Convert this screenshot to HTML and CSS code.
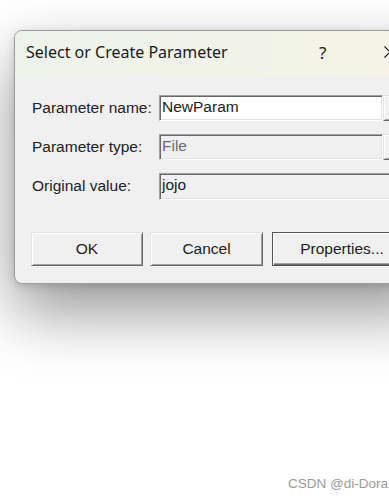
FILE: index.html
```html
<!DOCTYPE HTML>
<html>

<head>
    <meta charset="utf-8">
    <link rel="stylesheet" href="styles.css">
</head>

<body>
    <div class="screen">
        <div class="dialog">
            <div class="titlebar">
                <span class="title">Select or Create Parameter</span>
                <span class="help">?</span>
                <svg class="close" width="12" height="12" viewBox="0 0 12 12">
                    <path d="M0.5 0.5 L11.5 11.5 M11.5 0.5 L0.5 11.5" stroke="#1a1a1a" stroke-width="1.2" fill="none" />
                </svg>
            </div>
            <div class="content">
                <div class="fields">
                    <span class="label">Parameter name:</span>
                    <div class="field">
                        <div class="input">NewParam</div>
                        <div class="browse"></div>
                    </div>
                    <span class="label">Parameter type:</span>
                    <div class="field">
                        <div class="input disabled">File</div>
                        <div class="browse"></div>
                    </div>
                    <span class="label">Original value:</span>
                    <div class="field">
                        <div class="input readonly wide">jojo</div>
                    </div>
                </div>
                <div class="buttons">
                    <a href="#" class="btn ok">OK</a>
                    <a href="#" class="btn cancel">Cancel</a>
                    <a href="#" class="btn props">Properties...</a>
                </div>
            </div>
        </div>
        <div class="watermark">CSDN @di-Dora</div>
    </div>
</body>

</html>
```

FILE: styles.css
```css
html, body {
    margin: 0;
    padding: 0;
    background: #fff;
    overflow: hidden;
}
.screen {
    width: 389px;
    height: 498px;
    display: flex;
    flex-direction: column;
    overflow: hidden;
    font-family: "Liberation Sans", Arial, sans-serif;
}
.dialog {
    margin: 30px 0 0 14px;
    width: 420px;
    flex-shrink: 0;
    background: #f0f0f0;
    border: 1px solid #9c9c9c;
    border-radius: 8px;
    box-shadow: 0 28px 64px rgba(0, 0, 0, .42), 0 2px 8px rgba(0, 0, 0, .14);
    overflow: hidden;
}
.titlebar {
    height: 45px;
    box-sizing: border-box;
    padding: 0 39px 3px 11px;
    display: flex;
    align-items: center;
    background: linear-gradient(90deg, #eef3ea, #f5f3e6);
    color: #1a1a1a;
}
.title {
    flex: 1;
    font-family: "Noto Sans", "Open Sans", sans-serif;
    font-size: 16px;
}
.help {
    font-family: "Noto Sans", sans-serif;
    font-size: 17px;
    width: 10px;
    margin-right: 55px;
}
.close {
    display: block;
}
.content {
    padding: 19px 0 17px 17px;
}
.fields {
    display: grid;
    grid-template-columns: 127px 1fr;
    row-gap: 13px;
    align-items: center;
}
.label {
    font-size: 15.5px;
    color: #222;
}
.field {
    display: flex;
    height: 26px;
}
.input {
    box-sizing: border-box;
    width: 224px;
    height: 26px;
    background: #fff;
    border-top: 1px solid #a0a0a0;
    border-left: 1px solid #a0a0a0;
    border-bottom: 1px solid #fff;
    border-right: 1px solid #fff;
    box-shadow: inset 1px 1px #696969, inset -1px -1px #e3e3e3;
    padding: 2px 0 0 2px;
    font-size: 15.5px;
    color: #222;
}
.input.disabled {
    background: #f0f0f0;
    color: #6d6d6d;
}
.input.readonly {
    background: #f0f0f0;
}
.input.wide {
    width: 260px;
    height: 27px;
}
.browse {
    box-sizing: border-box;
    width: 24px;
    height: 26px;
    background: #f0f0f0;
    border-top: 1px solid #e3e3e3;
    border-left: 1px solid #e3e3e3;
    border-bottom: 1px solid #696969;
    border-right: 1px solid #696969;
    box-shadow: inset 1px 1px #fff, inset -1px -1px #a0a0a0;
}
.buttons {
    display: flex;
    margin: 33px 0 0 -1px;
}
.btn {
    box-sizing: border-box;
    height: 34px;
    display: flex;
    align-items: center;
    justify-content: center;
    background: #f0f0f0;
    border-top: 1px solid #e3e3e3;
    border-left: 1px solid #e3e3e3;
    border-bottom: 1px solid #696969;
    border-right: 1px solid #696969;
    box-shadow: inset 1px 1px #fff, inset -1px -1px #a0a0a0;
    font-size: 15.5px;
    color: #222;
    text-decoration: none;
}
.ok {
    width: 112px;
}
.cancel {
    width: 113px;
    margin-left: 7px;
}
.props {
    width: 140px;
    margin-left: 9px;
    border: 1px solid #555;
    box-shadow: inset 1px 1px #fff, inset -1px -1px #696969, inset -2px -2px #a0a0a0;
}
.watermark {
    margin-top: auto;
    padding: 0 1px 7px 0;
    text-align: right;
    font-family: "Liberation Sans", Arial, sans-serif;
    font-size: 13.5px;
    color: #9a9a9a;
}
```
